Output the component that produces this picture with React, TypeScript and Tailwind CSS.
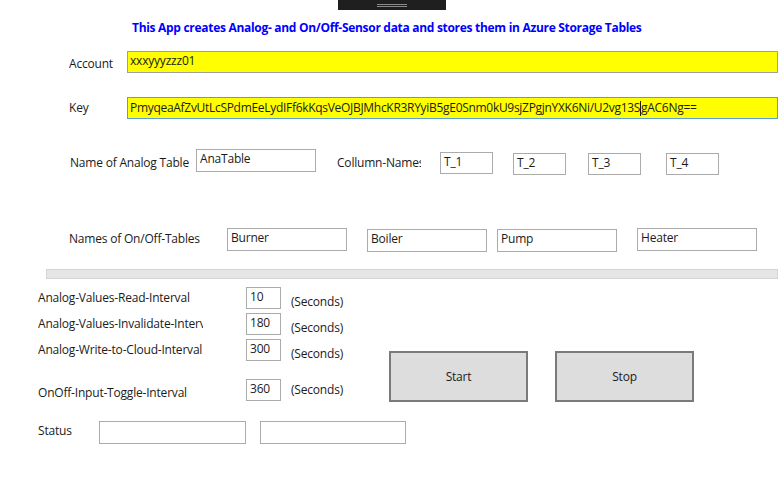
const Box = ({ text = "", className = "" }: { text?: string; className?: string }) => (
  <div className={`shrink-0 h-[22px] border border-[#ababab] bg-white pl-[3px] leading-[18px] whitespace-nowrap overflow-hidden ${className}`}>{text}</div>
)

const IntervalRow = ({ label, value, className = "", labelTop = "mt-[3px]", secTop = "mt-[7px]" }: { label: string; value: string; className?: string; labelTop?: string; secTop?: string }) => (
  <div className={`flex items-start h-[22px] ${className}`}>
    <div className="w-[208px] shrink-0">
      <div className={`w-[165px] overflow-hidden whitespace-nowrap leading-[16px] ${labelTop}`}>{label}</div>
    </div>
    <Box text={value} className="w-[35px]" />
    <div className={`ml-[10px] leading-[16px] whitespace-nowrap ${secTop}`}>(Seconds)</div>
  </div>
)

export default function App() {
  return (
    <div className="w-[784px] h-[501px] bg-white overflow-hidden font-['Open_Sans',sans-serif] text-[12px] tracking-[-0.2px] text-[#1b1b1b]">
      <div className="ml-[338px] w-[108px] h-[10px] bg-[#1f1f1f] flex flex-col items-center pt-[4px] gap-[1px]">
        <div className="w-[30px] h-px bg-[#8a8a8a]" />
        <div className="w-[30px] h-px bg-[#8a8a8a]" />
      </div>

      <div className="mt-[11px] pl-[132px] h-[14px] leading-[14px] font-bold tracking-[-0.3px] text-[#0000ff] whitespace-nowrap">
        This App creates Analog- and On/Off-Sensor data and stores them in Azure Storage Tables
      </div>

      <div className="mt-[16px] flex items-center h-[22px]">
        <div className="w-[127px] pl-[69px] pt-[3px]">Account</div>
        <div className="w-[651px] h-[22px] border border-[#a0a0a0] bg-[#ffff00] pl-[2px] leading-[18px]">xxxyyyzzz01</div>
      </div>

      <div className="mt-[24px] flex items-center h-[22px]">
        <div className="w-[127px] pl-[69px]">Key</div>
        <div className="w-[651px] h-[22px] border border-[#5a9be0] bg-[#ffff00] pl-[2px] leading-[20px] tracking-[-0.3px] whitespace-nowrap overflow-hidden">
          PmyqeaAfZvUtLcSPdmEeLydIFf6kKqsVeOJBJMhcKR3RYyiB5gE0Snm0kU9sjZPgjnYXK6Ni/U2vg13S
          <span className="inline-block w-px h-[15px] bg-[#1b1b1b] align-middle" />
          gAC6Ng==
        </div>
      </div>

      <div className="mt-[30px] flex items-start h-[26px]">
        <div className="w-[196px] pl-[70px] mt-[6px] leading-[16px] whitespace-nowrap">Name of Analog Table</div>
        <Box text="AnaTable" className="w-[120px] h-[23px]" />
        <div className="ml-[21px] w-[84px] mt-[6px] leading-[16px] overflow-hidden whitespace-nowrap">Collumn-Names</div>
        <Box text="T_1" className="ml-[19px] mt-[3px] w-[53px]" />
        <Box text="T_2" className="ml-[20px] mt-[4px] w-[53px]" />
        <Box text="T_3" className="ml-[22px] mt-[4px] w-[53px]" />
        <Box text="T_4" className="ml-[25px] mt-[4px] w-[53px]" />
      </div>

      <div className="mt-[53px] flex items-start h-[24px]">
        <div className="w-[227px] pl-[69px] mt-[3px] leading-[16px] whitespace-nowrap">Names of On/Off-Tables</div>
        <Box text="Burner" className="w-[120px] h-[23px]" />
        <Box text="Boiler" className="ml-[20px] mt-[1px] w-[120px] h-[23px]" />
        <Box text="Pump" className="ml-[10px] mt-[1px] w-[120px] h-[23px]" />
        <Box text="Heater" className="ml-[20px] w-[120px] h-[23px]" />
      </div>

      <div className="mt-[17px] ml-[46px] w-[732px] h-[10px] bg-[#e6e6e6] border border-[#d4d4d4]" />

      <div className="flex mt-[8px]">
        <div className="w-[389px] shrink-0 pl-[38px]">
          <IntervalRow label="Analog-Values-Read-Interval" value="10" />
          <IntervalRow label="Analog-Values-Invalidate-Interval" value="180" className="mt-[4px]" />
          <IntervalRow label="Analog-Write-to-Cloud-Interval" value="300" className="mt-[4px]" />
          <IntervalRow label="OnOff-Input-Toggle-Interval" value="360" className="mt-[18px]" labelTop="mt-[6px]" secTop="mt-[3px]" />
          <div className="mt-[20px] flex items-start">
            <div className="w-[61px] shrink-0 mt-[2px] leading-[16px]">Status</div>
            <Box className="w-[147px] h-[23px]" />
            <Box className="ml-[14px] w-[146px] h-[23px]" />
          </div>
        </div>
        <div className="flex mt-[64px] gap-[27px] items-start">
          <button className="w-[139px] h-[51px] bg-[#dddddd] border-2 border-[#7a7a7a] text-[12px]">Start</button>
          <button className="w-[139px] h-[51px] bg-[#dddddd] border-2 border-[#7a7a7a] text-[12px]">Stop</button>
        </div>
      </div>
    </div>
  )
}
